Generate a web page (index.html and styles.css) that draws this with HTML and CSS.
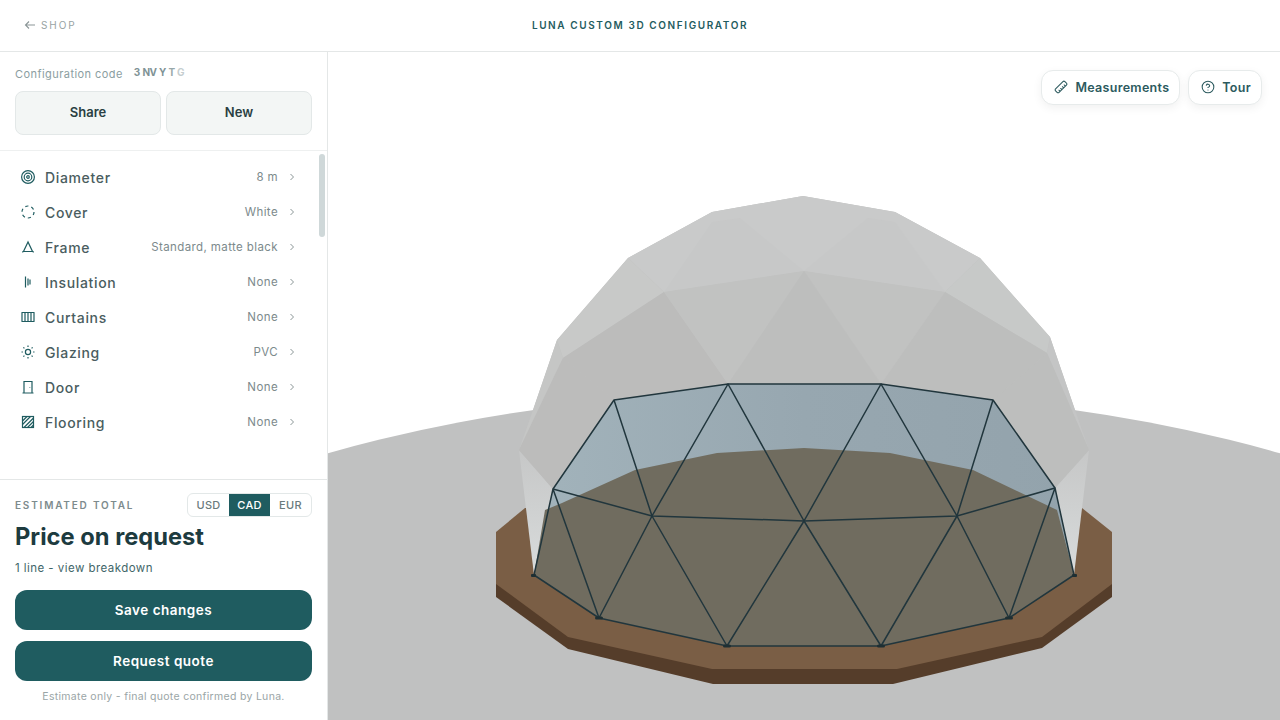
FILE: index.html
```html
<!DOCTYPE html>
<html lang="en">
<head>
  <meta charset="UTF-8" />
  <meta name="viewport" content="width=device-width, initial-scale=1.0"/>
  <title>Luna Custom 3D Configurator</title>
  <link rel="stylesheet" href="styles.css">
</head>
<body>
  <header class="topbar">
    <a class="back-link" href="#">
      <svg class="back-arrow" viewBox="0 0 12 12"><path d="M11 6H1.5M5 2.5 1.5 6 5 9.5"/></svg>
      SHOP
    </a>
    <div class="topbar-title">LUNA CUSTOM 3D CONFIGURATOR</div>
  </header>

  <div class="workspace">
    <aside class="sidebar">
      <section class="config-head">
        <div class="code-line">
          <span class="code-label">Configuration code</span>
          <span class="code-value">3<span class="tight">N</span>VY<span class="fade-a">T</span><span class="fade-b">G</span></span>
        </div>
        <div class="config-actions">
          <button class="soft-button">Share</button>
          <button class="soft-button">New</button>
        </div>
      </section>

      <nav class="option-list">
        <div class="scroll-thumb"></div>
        <div class="option-row">
          <svg class="option-icon" viewBox="0 0 16 16"><circle cx="8" cy="8" r="6.4"/><circle cx="8" cy="8" r="3.8"/><circle cx="8" cy="8" r="1.3"/></svg>
          <span class="option-name">Diameter</span><span class="option-value">8 m</span>
          <svg class="chevron" viewBox="0 0 8 8"><path d="M2.5 1 5.5 4 2.5 7"/></svg>
        </div>
        <div class="option-row">
          <svg class="option-icon" viewBox="0 0 16 16"><circle cx="8" cy="8" r="6" stroke-dasharray="3.2 3"/></svg>
          <span class="option-name">Cover</span><span class="option-value">White</span>
          <svg class="chevron" viewBox="0 0 8 8"><path d="M2.5 1 5.5 4 2.5 7"/></svg>
        </div>
        <div class="option-row">
          <svg class="option-icon" viewBox="0 0 16 16"><path d="M8 3 3.5 12.5h9ZM3.5 12.5l-1.3.6M12.5 12.5l1.3.6"/></svg>
          <span class="option-name">Frame</span><span class="option-value">Standard, matte black</span>
          <svg class="chevron" viewBox="0 0 8 8"><path d="M2.5 1 5.5 4 2.5 7"/></svg>
        </div>
        <div class="option-row">
          <svg class="option-icon" viewBox="0 0 16 16"><path d="M5.5 2.5v11M8 4.5v7M10 5.5v5"/></svg>
          <span class="option-name">Insulation</span><span class="option-value">None</span>
          <svg class="chevron" viewBox="0 0 8 8"><path d="M2.5 1 5.5 4 2.5 7"/></svg>
        </div>
        <div class="option-row">
          <svg class="option-icon" viewBox="0 0 16 16"><path d="M1.5 3.5h13M2 3.5v9M5 3.5v9M8 3.5v9M11 3.5v9M14 3.5v9M1.5 12.5h13"/></svg>
          <span class="option-name">Curtains</span><span class="option-value">None</span>
          <svg class="chevron" viewBox="0 0 8 8"><path d="M2.5 1 5.5 4 2.5 7"/></svg>
        </div>
        <div class="option-row">
          <svg class="option-icon" viewBox="0 0 16 16"><circle cx="8" cy="8" r="2.6"/><path d="M8 1.5v1.4M8 13.1v1.4M1.5 8h1.4M13.1 8h1.4M3.4 3.4l1 1M11.6 11.6l1 1M3.4 12.6l1-1M11.6 4.4l1-1"/></svg>
          <span class="option-name">Glazing</span><span class="option-value">PVC</span>
          <svg class="chevron" viewBox="0 0 8 8"><path d="M2.5 1 5.5 4 2.5 7"/></svg>
        </div>
        <div class="option-row">
          <svg class="option-icon" viewBox="0 0 16 16"><path d="M4 14V2.5h8V14M2.5 14h11M9.8 8v.6"/></svg>
          <span class="option-name">Door</span><span class="option-value">None</span>
          <svg class="chevron" viewBox="0 0 8 8"><path d="M2.5 1 5.5 4 2.5 7"/></svg>
        </div>
        <div class="option-row">
          <svg class="option-icon" viewBox="0 0 16 16"><rect x="2.5" y="2.5" width="11" height="11"/><path d="M2.5 7 7 2.5M2.5 10.5l8-8M4 13.5l9.5-9.5M7.5 13.5l6-6M11 13.5l2.5-2.5"/></svg>
          <span class="option-name">Flooring</span><span class="option-value">None</span>
          <svg class="chevron" viewBox="0 0 8 8"><path d="M2.5 1 5.5 4 2.5 7"/></svg>
        </div>
      </nav>

      <section class="summary">
        <div class="summary-head">
          <span class="summary-label">ESTIMATED TOTAL</span>
          <div class="currency-toggle">
            <span class="currency">USD</span>
            <span class="currency active">CAD</span>
            <span class="currency">EUR</span>
          </div>
        </div>
        <div class="price">Price on request</div>
        <a class="breakdown" href="#">1 line - view breakdown</a>
        <button class="primary-button">Save changes</button>
        <button class="primary-button">Request quote</button>
        <p class="fine-print">Estimate only - final quote confirmed by Luna.</p>
      </section>
    </aside>

    <main class="viewer">
      <svg class="scene" viewBox="328 52 952 668" preserveAspectRatio="none">
        <defs>
          <linearGradient id="coverSide" x1="0" y1="0" x2="0" y2="1">
            <stop offset="0" stop-color="#c6c7c7"/><stop offset="0.5" stop-color="#cfd1d1"/><stop offset="1" stop-color="#d9dcdc"/>
          </linearGradient>
          <linearGradient id="glass" x1="0" y1="0" x2="1" y2="0">
            <stop offset="0" stop-color="#a2b3bb"/><stop offset="0.5" stop-color="#97a7b0"/><stop offset="1" stop-color="#93a3ac"/>
          </linearGradient>
        </defs>

        <!-- ground -->
        <ellipse cx="804" cy="802" rx="900" ry="411" fill="#c0c1c1"/>

        <!-- deck -->
        <polygon fill="#553d2a" points="496,584 496,597 568,649 713,684 893,684 1042,648 1112,597 1112,584"/>
        <polygon fill="#7a5e45" points="525,508 496,532 496,584 568,637 712,669 897,669 1042,637 1112,584 1112,532 1082,508"/>

        <!-- cover side strips -->
        <polygon fill="url(#coverSide)" points="519,450 553,489 534,575"/>
        <polygon fill="url(#coverSide)" points="1089,450 1055,488 1074,575"/>

        <!-- cover facets -->
        <polygon fill="#c0c1c0" points="803,196 895,212 980,258 1050,337 1075,410 1089,450 1055,488 993,400 881,384 728,384 614,400 553,489 519,450 533,410 557,340 628,258 712,212"/>
        <polygon fill="#c9caca" points="803,196 712,212 628,258 664,292 804,271 945,292 980,258 895,212"/>
        <polygon fill="#c7c8c8" points="712,222 664,292 804,271 740,218"/>
        <polygon fill="#c7c8c8" points="895,222 945,292 804,271 868,218"/>
        <polygon fill="#c8c9c8" points="628,258 557,340 563,358 664,292"/>
        <polygon fill="#c7c9c8" points="980,258 1050,337 1047,353 945,292"/>
        <polygon fill="#c5c6c5" points="557,340 533,410 519,450 563,358"/>
        <polygon fill="#c4c5c5" points="1050,337 1075,410 1089,450 1047,353"/>
        <polygon fill="#bcbcbb" points="563,358 519,450 553,489 614,400"/>
        <polygon fill="#bdbebd" points="1047,353 1089,450 1055,488 993,400"/>
        <polygon fill="#bcbcbb" points="664,292 563,358 614,400 728,384"/>
        <polygon fill="#bdbebd" points="945,292 1047,353 993,400 881,384"/>
        <polygon fill="#c1c2c1" points="664,292 804,271 728,384"/>
        <polygon fill="#c1c2c1" points="804,271 945,292 881,384"/>
        <polygon fill="#bdbebd" points="804,271 728,384 881,384"/>

        <!-- glazing and floor -->
        <polygon fill="url(#glass)" points="614,400 728,384 881,384 993,400 1055,488 1074,575 1009,618 881,646 727,646 599,618 534,575 553,489"/>
        <polygon fill="#706c5f" points="545,510 562,503 635,470 717,453 804,448 890,453 973,470 1057,510 1074,575 1009,618 881,646 727,646 599,618 534,575"/>

        <!-- frame -->
        <g class="frame">
          <path d="M553 489 614 400 728 384H881L993 400 1055 488"/>
          <path d="M614 400 652 516 728 384 804 521 881 384 957 516 993 400"/>
          <path d="M553 489 652 516 804 521 957 516 1055 488"/>
          <path d="M534 575 553 489 599 618 652 516 727 646 804 521 881 646 957 516 1009 618 1055 488 1074 575"/>
          <path d="M534 575 599 618 727 646H881L1009 618 1074 575"/>
        </g>
        <g class="feet">
          <rect x="531" y="574" width="5" height="3" rx="1"/>
          <rect x="595" y="616.5" width="8" height="3" rx="1.5"/>
          <rect x="723" y="644.5" width="8" height="3" rx="1.5"/>
          <rect x="877" y="644.5" width="8" height="3" rx="1.5"/>
          <rect x="1005" y="616.5" width="8" height="3" rx="1.5"/>
          <rect x="1072" y="574" width="5" height="3" rx="1"/>
        </g>
      </svg>

      <div class="view-tools">
        <button class="tool-button">
          <svg class="tool-icon" viewBox="0 0 24 24"><path d="M21.3 15.3a2.4 2.4 0 0 1 0 3.4l-2.6 2.6a2.4 2.4 0 0 1-3.4 0L2.7 8.7a2.41 2.41 0 0 1 0-3.4l2.6-2.6a2.41 2.41 0 0 1 3.4 0ZM14.5 12.5l2-2M11.5 9.5l2-2M8.5 6.5l2-2M17.5 15.5l2-2" transform="rotate(90 12 12)"/></svg>
          Measurements
        </button>
        <button class="tool-button">
          <svg class="tool-icon" viewBox="0 0 24 24"><circle cx="12" cy="12" r="10"/><path d="M9.1 9a3 3 0 0 1 5.8 1c0 2-3 3-3 3M12 17h.01"/></svg>
          Tour
        </button>
      </div>
    </main>
  </div>
</body>
</html>
```

FILE: styles.css
```css
* {
  box-sizing: border-box;
}

body {
  margin: 0;
  height: 720px;
  display: flex;
  flex-direction: column;
  overflow: hidden;
  background: #fff;
  font-family: 'Inter', 'Liberation Sans', sans-serif;
  color: #1d3b3f;
}

button {
  font-family: inherit;
  cursor: pointer;
}

.topbar {
  height: 52px;
  flex: none;
  display: flex;
  align-items: center;
  justify-content: center;
  position: relative;
  border-bottom: 1px solid #e4e7e7;
}

.back-link {
  position: absolute;
  left: 24px;
  top: 19px;
  display: flex;
  align-items: center;
  gap: 5px;
  font-size: 10px;
  letter-spacing: 1.95px;
  color: #98a3a4;
  text-decoration: none;
}

.back-arrow {
  width: 12px;
  height: 12px;
  fill: none;
  stroke: #8b9697;
  stroke-width: 1.1;
}

.topbar-title {
  font-size: 10px;
  font-weight: 600;
  letter-spacing: 1.6px;
  color: #1f5c60;
  margin-top: -1px;
}

.workspace {
  flex: 1;
  display: flex;
  min-height: 0;
}

.sidebar {
  width: 328px;
  flex: none;
  display: flex;
  flex-direction: column;
  border-right: 1px solid #e4e7e7;
}

.config-head {
  height: 99px;
  flex: none;
  padding: 15px 15px 0;
  border-bottom: 1px solid #eef0f0;
}

.code-line {
  display: flex;
  align-items: center;
  gap: 11px;
  height: 13px;
}

.code-label {
  font-size: 11px;
  letter-spacing: 0.44px;
  color: #8b9ea1;
}

.code-value {
  font-size: 10px;
  font-weight: 700;
  letter-spacing: 2.1px;
  color: #7f9396;
  margin-top: -3px;
}

.tight {
  letter-spacing: -0.5px;
}

.fade-a {
  opacity: 0.8;
}

.fade-b {
  opacity: 0.45;
}

.config-actions {
  display: flex;
  gap: 5px;
  margin-top: 11px;
}

.soft-button {
  flex: 1;
  height: 44px;
  padding-bottom: 3px;
  border: 1px solid #e3e8e8;
  border-radius: 8px;
  background: #f3f6f5;
  font-size: 13px;
  font-weight: 600;
  color: #2a3f42;
}

.option-list {
  flex: 1;
  padding: 8px 0 0 0;
  position: relative;
  min-height: 0;
}

.scroll-thumb {
  position: absolute;
  left: 319px;
  top: 3px;
  width: 6px;
  height: 83px;
  border-radius: 3px;
  background: #cfd8d9;
}

.option-row {
  height: 35px;
  display: flex;
  align-items: center;
  padding: 0 37px 0 20px;
}

.option-icon {
  width: 16px;
  height: 16px;
  flex: none;
  fill: none;
  stroke: #1f5c60;
  stroke-width: 1.2;
  margin-right: 9px;
}

.option-name {
  padding-top: 1px;
  font-size: 14px;
  font-weight: 500;
  letter-spacing: 0.65px;
  color: #4a5d60;
  flex: 1;
}

.option-value {
  padding-top: 1px;
  font-size: 11.5px;
  letter-spacing: 0.4px;
  color: #7c8a8c;
}

.chevron {
  width: 8px;
  height: 8px;
  flex: none;
  margin-left: 10px;
  margin-right: -6px;
  fill: none;
  stroke: #8b9697;
  stroke-width: 1;
}

.summary {
  height: 241px;
  flex: none;
  padding: 13px 15px 0;
  border-top: 1px solid #e4e7e7;
}

.summary-head {
  display: flex;
  align-items: center;
  justify-content: space-between;
}

.summary-label {
  font-size: 10px;
  font-weight: 600;
  letter-spacing: 1.8px;
  color: #7d8b8d;
}

.currency-toggle {
  display: flex;
  width: 125px;
  height: 24px;
  border: 1px solid #e3e8e8;
  border-radius: 6px;
  overflow: hidden;
}

.currency {
  flex: 1;
  display: flex;
  align-items: center;
  justify-content: center;
  font-size: 11px;
  font-weight: 500;
  letter-spacing: 0.3px;
  color: #6a7b7d;
}

.currency.active {
  background: #1f5c60;
  color: #fff;
}

.price {
  margin-top: 6px;
  font-size: 23.7px;
  line-height: 28px;
  font-weight: 700;
  color: #1d3b3f;
}

.breakdown {
  display: block;
  margin-top: 10px;
  font-size: 11.5px;
  line-height: 15px;
  letter-spacing: 0.45px;
  color: #3f6669;
  text-decoration: none;
}

.primary-button {
  display: block;
  width: 100%;
  height: 40px;
  margin-top: 11px;
  border: none;
  border-radius: 12px;
  background: #1f5c60;
  font-size: 13.5px;
  font-weight: 600;
  letter-spacing: 0.5px;
  color: #fff;
}

.breakdown + .primary-button {
  margin-top: 14px;
}

.fine-print {
  margin: 9px 0 0;
  font-size: 10.5px;
  line-height: 14px;
  letter-spacing: 0.3px;
  text-align: center;
  color: #9aa5a6;
}

.viewer {
  flex: 1;
  position: relative;
  min-width: 0;
}

.scene {
  display: block;
  width: 100%;
  height: 100%;
}

.frame path {
  fill: none;
  stroke: #21363d;
  stroke-width: 1.5;
  stroke-linejoin: round;
}

.feet rect {
  fill: #1e2f33;
}

.view-tools {
  position: absolute;
  top: 18px;
  right: 18px;
  display: flex;
  gap: 8px;
}

.tool-button {
  height: 35px;
  padding: 0 10px 1px 12px;
  display: flex;
  align-items: center;
  gap: 7px;
  border: 1px solid #e7ebeb;
  border-radius: 12px;
  background: #fff;
  box-shadow: 0 3px 10px rgba(0, 0, 0, 0.06);
  font-size: 12.5px;
  font-weight: 600;
  letter-spacing: 0.3px;
  color: #2c5a5e;
}

.tool-icon {
  width: 14px;
  height: 14px;
  flex: none;
  fill: none;
  stroke: #2c5a5e;
  stroke-width: 1.8;
  stroke-linecap: round;
  stroke-linejoin: round;
}
```
